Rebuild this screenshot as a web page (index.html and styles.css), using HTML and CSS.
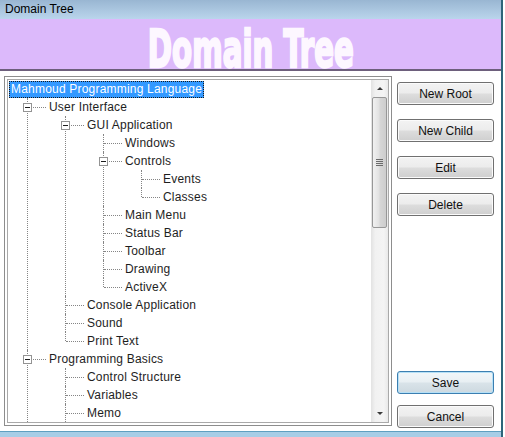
FILE: index.html
```html
<!DOCTYPE html>
<html>
<head>
<meta charset="utf-8">
<title>Domain Tree</title>
<link rel="stylesheet" href="styles.css">
</head>
<body>
<div class="window">
  <div class="titlebar">Domain Tree</div>
  <div class="banner"><span class="banner-text">Domain Tree</span></div>
  <div class="content">
    <div class="tree-frame">
      <div class="tree-inner">
        <div class="tree-view">
          <ul class="tree">
            <li>
              <div class="row"><span class="label selected">Mahmoud Programming Language</span></div>
              <ul>
                <li class="more">
                  <div class="row"><span class="toggle"></span><span class="label">User Interface</span></div>
                  <ul>
                    <li>
                      <div class="row"><span class="toggle"></span><span class="label">GUI Application</span></div>
                      <ul>
                        <li><div class="row"><span class="label">Windows</span></div></li>
                        <li>
                          <div class="row"><span class="toggle"></span><span class="label">Controls</span></div>
                          <ul>
                            <li><div class="row"><span class="label">Events</span></div></li>
                            <li><div class="row"><span class="label">Classes</span></div></li>
                          </ul>
                        </li>
                        <li><div class="row"><span class="label">Main Menu</span></div></li>
                        <li><div class="row"><span class="label">Status Bar</span></div></li>
                        <li><div class="row"><span class="label">Toolbar</span></div></li>
                        <li><div class="row"><span class="label">Drawing</span></div></li>
                        <li><div class="row"><span class="label">ActiveX</span></div></li>
                      </ul>
                    </li>
                    <li><div class="row"><span class="label">Console Application</span></div></li>
                    <li><div class="row"><span class="label">Sound</span></div></li>
                    <li><div class="row"><span class="label">Print Text</span></div></li>
                  </ul>
                </li>
                <li class="more">
                  <div class="row"><span class="toggle"></span><span class="label">Programming Basics</span></div>
                  <ul>
                    <li><div class="row"><span class="label">Control Structure</span></div></li>
                    <li><div class="row"><span class="label">Variables</span></div></li>
                    <li class="more"><div class="row"><span class="label">Memo</span></div></li>
                  </ul>
                </li>
              </ul>
            </li>
          </ul>
        </div>
        <div class="scrollbar">
          <div class="sb-btn"><span class="arrow-up"></span></div>
          <div class="sb-thumb"><span class="grip"></span></div>
          <div class="sb-track"></div>
          <div class="sb-btn"><span class="arrow-down"></span></div>
        </div>
      </div>
    </div>
    <div class="buttons">
      <div class="btn-group">
        <button class="btn">New Root</button>
        <button class="btn">New Child</button>
        <button class="btn">Edit</button>
        <button class="btn">Delete</button>
      </div>
      <div class="btn-group bottom">
        <button class="btn default">Save</button>
        <button class="btn">Cancel</button>
      </div>
    </div>
  </div>
  <div class="frame-bottom"></div>
</div>
</body>
</html>
```

FILE: styles.css
```css
html, body {
  margin: 0;
  padding: 0;
  background: #ffffff;
}

.window {
  width: 501px;
  height: 437px;
  border-right: 2px solid #2e6479;
  display: flex;
  flex-direction: column;
  font-family: "Liberation Sans", Arial, sans-serif;
  font-size: 12px;
  color: #111;
}

.titlebar {
  height: 19px;
  box-sizing: border-box;
  padding-left: 5px;
  line-height: 19px;
  background: linear-gradient(#99b6d2, #bad5ec);
  color: #000;
  font-size: 12px;
}

.banner {
  height: 52px;
  box-sizing: border-box;
  padding-top: 10px;
  background: #dcb9fb;
  border-bottom: 2px solid #6d5f7c;
  display: flex;
  justify-content: center;
  align-items: flex-start;
}

.banner-text {
  display: block;
  height: 40px;
  line-height: 40px;
  font-family: "DejaVu Sans Condensed", "Liberation Sans", sans-serif;
  font-weight: bold;
  font-size: 52px;
  color: #fdf7ff;
  -webkit-text-stroke: 2.4px #fdf7ff;
  transform: scaleX(0.625);
  white-space: nowrap;
}

.content {
  height: 360px;
  display: flex;
  padding: 5px 0 0 4px;
  box-sizing: border-box;
  background: #fff;
}

.tree-frame {
  width: 388px;
  height: 350px;
  box-sizing: border-box;
  border: 1px solid #8d8d8d;
  padding: 2px;
}

.tree-inner {
  height: 100%;
  box-sizing: border-box;
  border: 1px solid #a9a9a9;
  display: flex;
}

.tree-view {
  flex: 1;
  overflow: hidden;
  padding-left: 1px;
  background: #fff;
}

.tree, .tree ul {
  list-style: none;
  margin: 0;
  padding: 0;
}

.tree ul {
  padding-left: 38px;
}

.tree li {
  position: relative;
}

.tree ul > li::before {
  content: "";
  position: absolute;
  left: -20px;
  top: 0;
  bottom: 0;
  border-left: 1px dotted #858585;
}

.tree ul > li:last-child:not(.more)::before {
  bottom: auto;
  height: 9px;
}

.tree ul > li::after {
  content: "";
  position: absolute;
  left: -19px;
  top: 9px;
  width: 18px;
  border-top: 1px dotted #858585;
}

.row {
  height: 18px;
  display: flex;
  align-items: center;
}

.label {
  padding: 0 2px;
  height: 17px;
  line-height: 17px;
  white-space: nowrap;
  letter-spacing: 0.2px;
  color: #1e1e1e;
}

.label.selected {
  background: #3399ff;
  color: #fff;
  outline: 1px dotted #1a1a1a;
  outline-offset: -1px;
}

.toggle {
  position: absolute;
  left: -24px;
  top: 5px;
  width: 9px;
  height: 9px;
  box-sizing: border-box;
  border: 1px solid #939393;
  background: #fff;
  z-index: 1;
}

.toggle::before {
  content: "";
  position: absolute;
  left: 1px;
  top: 3px;
  width: 5px;
  height: 1px;
  background: #1c1c1c;
}

.scrollbar {
  width: 17px;
  display: flex;
  flex-direction: column;
  background: linear-gradient(to right, #e2e2e2, #f1f1f1 25%, #f4f4f4 75%, #e9e9e9);
}

.sb-btn {
  height: 17px;
  display: flex;
  align-items: center;
  justify-content: center;
}

.arrow-up {
  width: 0;
  height: 0;
  border-left: 3px solid transparent;
  border-right: 3px solid transparent;
  border-bottom: 3px solid #3a3a3a;
}

.arrow-down {
  width: 0;
  height: 0;
  border-left: 3px solid transparent;
  border-right: 3px solid transparent;
  border-top: 3px solid #3a3a3a;
}

.sb-thumb {
  height: 131px;
  margin: 0 1px;
  box-sizing: border-box;
  border: 1px solid #979797;
  border-radius: 2px;
  background: linear-gradient(to right, #f1f1f1, #e2e2e2 45%, #d6d6d6 55%, #cdcdcd);
  display: flex;
  align-items: center;
  justify-content: center;
}

.grip {
  width: 7px;
  height: 7px;
  background: repeating-linear-gradient(#6b6b6b 0 1px, transparent 1px 2px);
}

.sb-track {
  flex: 1;
}

.buttons {
  margin-left: 5px;
  width: 97px;
  display: flex;
  flex-direction: column;
  justify-content: space-between;
  padding: 6px 0 3px;
  box-sizing: border-box;
}

.btn-group {
  display: flex;
  flex-direction: column;
  gap: 14px;
}

.btn-group.bottom {
  gap: 11px;
}

.btn {
  width: 97px;
  height: 23px;
  box-sizing: border-box;
  border: 1px solid #707070;
  border-radius: 3px;
  background: linear-gradient(#f3f3f3 0%, #ececec 48%, #dddddd 52%, #cfcfcf 100%);
  box-shadow: inset 0 0 0 1px #fbfbfb;
  font-family: "Liberation Sans", Arial, sans-serif;
  font-size: 12px;
  color: #111;
  padding: 0;
}

.btn.default {
  border-color: #3c7fb1;
  box-shadow: inset 0 0 0 1px #b6e0f6;
  background: linear-gradient(#f1f6f9 0%, #e8eff3 48%, #d9e3e9 52%, #cdd9e0 100%);
}

.frame-bottom {
  height: 6px;
  box-sizing: border-box;
  border-top: 1px solid #5f9fc0;
  background: #a7cde6;
}
```
